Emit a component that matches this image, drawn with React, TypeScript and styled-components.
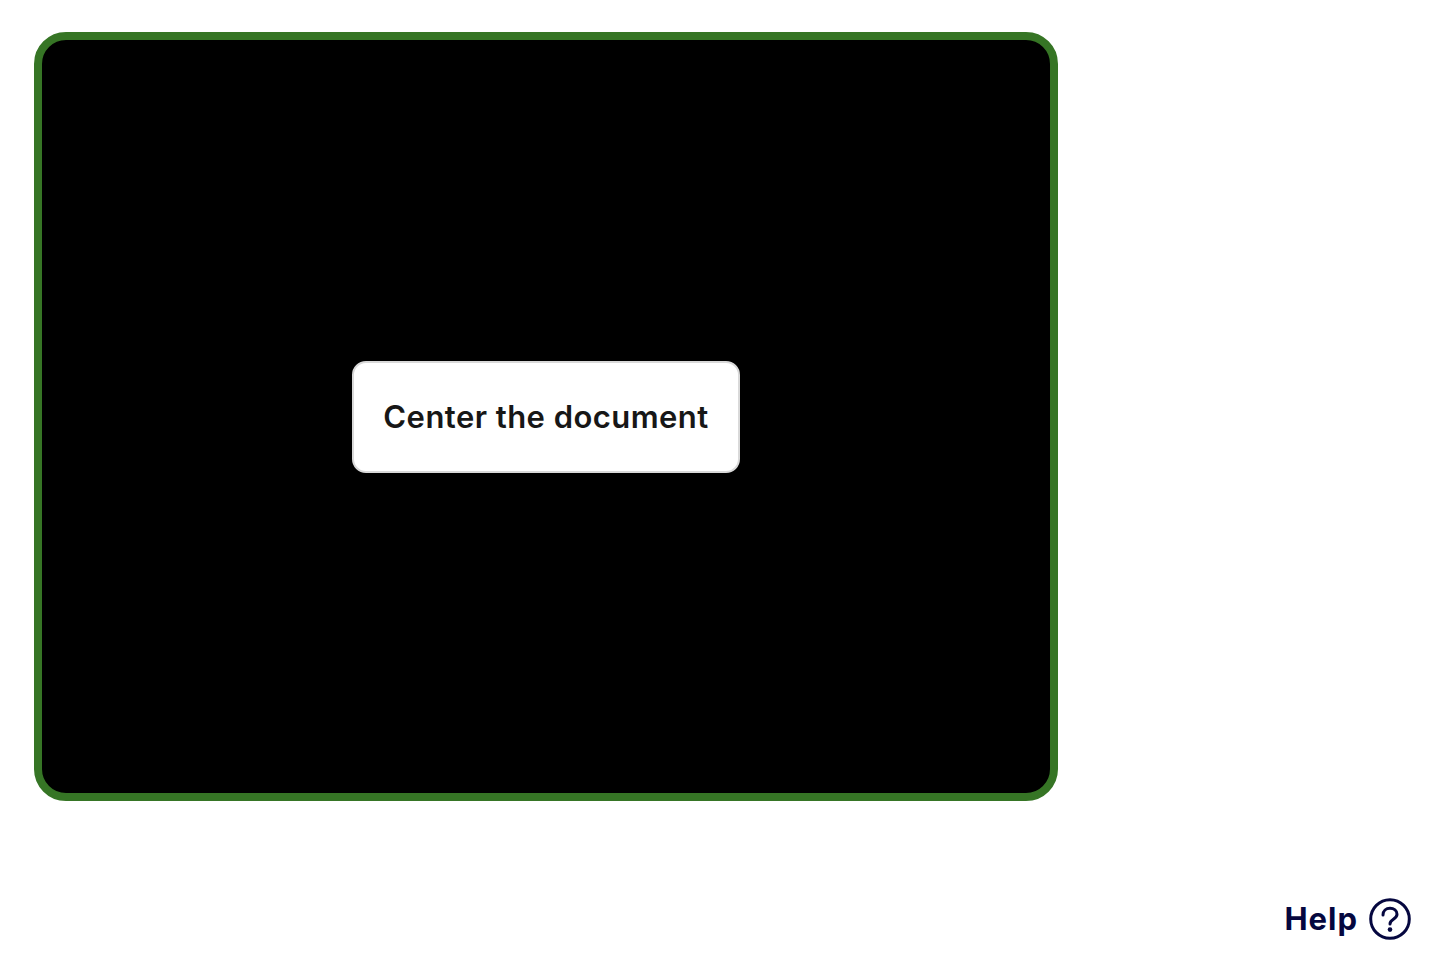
import styled, { createGlobalStyle } from "styled-components";

const GlobalStyle = createGlobalStyle`
  body {
    margin: 0;
    background: #ffffff;
    font-family: Inter, "Liberation Sans", sans-serif;
  }
`;

const Page = styled.div`
  box-sizing: border-box;
  height: 966px;
  padding: 32px 31px 26px 34px;
  display: flex;
  flex-direction: column;
  justify-content: space-between;
`;

const CameraFrame = styled.div`
  box-sizing: border-box;
  width: 1024px;
  height: 769px;
  border: 8px solid #367525;
  border-radius: 32px;
  background: #000000;
  display: flex;
  align-items: center;
  justify-content: center;
`;

const Prompt = styled.div`
  box-sizing: border-box;
  width: 388px;
  height: 112px;
  background: #ffffff;
  border: 2px solid #d9d9d9;
  border-radius: 14px;
  display: flex;
  align-items: center;
  justify-content: center;
  color: #171717;
  font-size: 31px;
  font-weight: 600;
  letter-spacing: 0.45px;
  padding-bottom: 1px;
`;

const HelpLink = styled.a`
  align-self: flex-end;
  display: flex;
  align-items: center;
  gap: 11px;
  color: #05073f;
  font-size: 31px;
  font-weight: 700;
  line-height: 42px;
  letter-spacing: 1px;
`;

const HelpIcon = () => (
  <svg width="42" height="42" viewBox="0 0 42 42" fill="none" stroke="#05073f" strokeWidth="3">
    <circle cx="21" cy="21" r="19.3" />
    <path d="M14 17c0-4 3.100-6.700 7-6.700s7 2.500 7 6c0 5.200-7 4.800-7 9.700" strokeLinecap="round" />
    <circle cx="21" cy="31.600" r="2.300" fill="#05073f" stroke="none" />
  </svg>
);

const App = () => (
  <>
    <GlobalStyle />
    <Page>
      <CameraFrame>
        <Prompt>Center the document</Prompt>
      </CameraFrame>
      <HelpLink>
        Help
        <HelpIcon />
      </HelpLink>
    </Page>
  </>
);

export default App;
